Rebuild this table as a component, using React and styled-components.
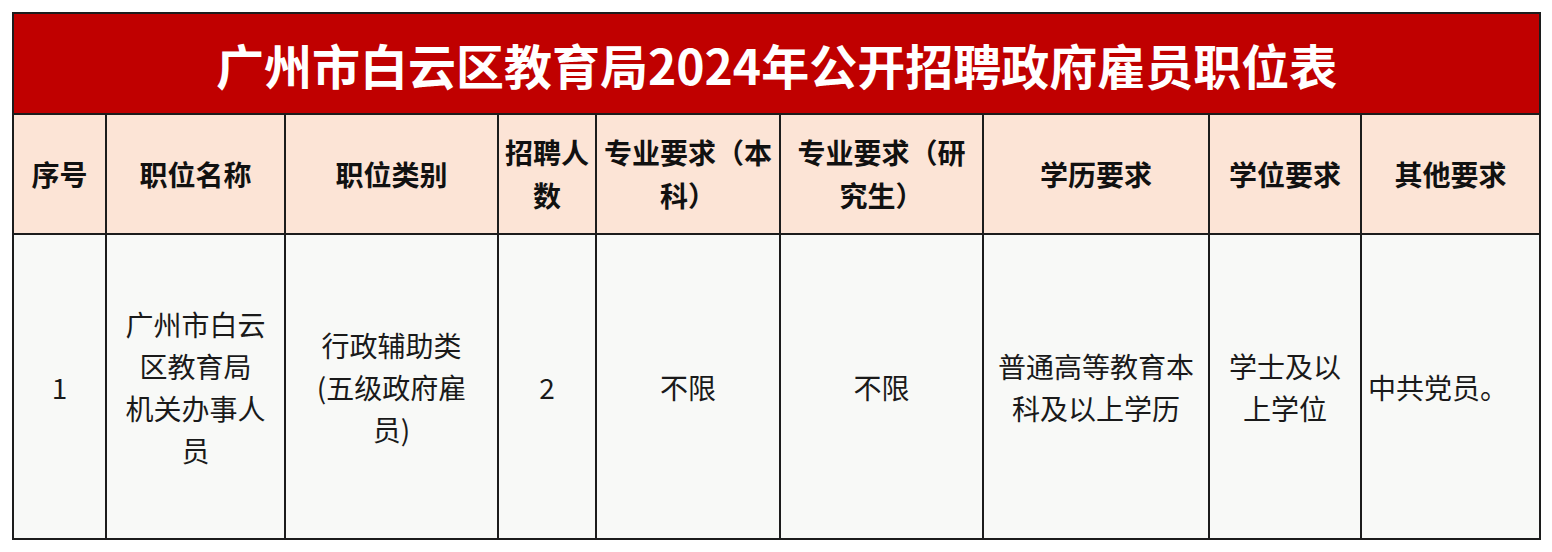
import styled, { createGlobalStyle } from 'styled-components';

// 职位表 数据
const columns = [
  { width: 93, title: ['序号'] },
  { width: 179, title: ['职位名称'] },
  { width: 213, title: ['职位类别'] },
  { width: 98, title: ['招聘人', '数'] },
  { width: 184, title: ['专业要求（本', '科）'] },
  { width: 203, title: ['专业要求（研', '究生）'] },
  { width: 226, title: ['学历要求'] },
  { width: 152, title: ['学位要求'] },
  { width: 179, title: ['其他要求'] },
];

const rows = [
  [
    ['1'],
    ['广州市白云', '区教育局', '机关办事人', '员'],
    ['行政辅助类', '(五级政府雇', '员)'],
    ['2'],
    ['不限'],
    ['不限'],
    ['普通高等教育本', '科及以上学历'],
    ['学士及以', '上学位'],
    ['中共党员。'],
  ],
];

const GlobalStyle = createGlobalStyle`
  body {
    margin: 0;
    background: #ffffff;
    font-family: "Noto Sans CJK SC", "Liberation Sans", sans-serif;
  }
`;

// 줄바꿈 처리
const Lines = ({ lines }) =>
  lines.map((line, i) => (
    <span key={i}>
      {i > 0 && <br />}
      {line}
    </span>
  ));

export default function App() {
  return (
    <>
      <GlobalStyle />
      <StPage>
        <StTable>
          <colgroup>
            {columns.map((col, i) => (
              <col key={i} style={{ width: col.width }} />
            ))}
          </colgroup>
          <thead>
            <tr>
              <StTitle colSpan={columns.length}>
                广州市白云区教育局2024年公开招聘政府雇员职位表
              </StTitle>
            </tr>
            <StHeadRow>
              {columns.map((col, i) => (
                <StHeadCell key={i}>
                  <Lines lines={col.title} />
                </StHeadCell>
              ))}
            </StHeadRow>
          </thead>
          <tbody>
            {rows.map((row, r) => (
              <StBodyRow key={r}>
                {row.map((cell, i) => (
                  <StBodyCell key={i} $left={i === row.length - 1}>
                    <Lines lines={cell} />
                  </StBodyCell>
                ))}
              </StBodyRow>
            ))}
          </tbody>
        </StTable>
      </StPage>
    </>
  );
}

const StPage = styled.div`
  padding: 12px 0 0 12px;
`;

const StTable = styled.table`
  width: 1528px;
  table-layout: fixed;
  border-collapse: collapse;
  border: 2px solid #1c1c1c;
`;

const StTitle = styled.th`
  height: 99px;
  padding: 0;
  background-color: #c00000;
  color: #ffffff;
  font-size: 48px;
  font-weight: 700;
  text-align: center;
  border: 2px solid #1c1c1c;
`;

const StHeadRow = styled.tr`
  height: 120px;
`;

const StHeadCell = styled.th`
  padding: 0 2px;
  background-color: #fce4d6;
  color: #111111;
  font-size: 28px;
  font-weight: 700;
  line-height: 43px;
  text-align: center;
  vertical-align: middle;
  border: 2px solid #1c1c1c;
`;

const StBodyRow = styled.tr`
  height: 305px;
`;

const StBodyCell = styled.td`
  padding: 0 6px;
  background-color: #f8f9f7;
  color: #1a1a1a;
  font-size: 28px;
  font-weight: 400;
  line-height: 42px;
  text-align: ${(props) => (props.$left ? 'left' : 'center')};
  vertical-align: middle;
  border: 2px solid #1c1c1c;
`;
